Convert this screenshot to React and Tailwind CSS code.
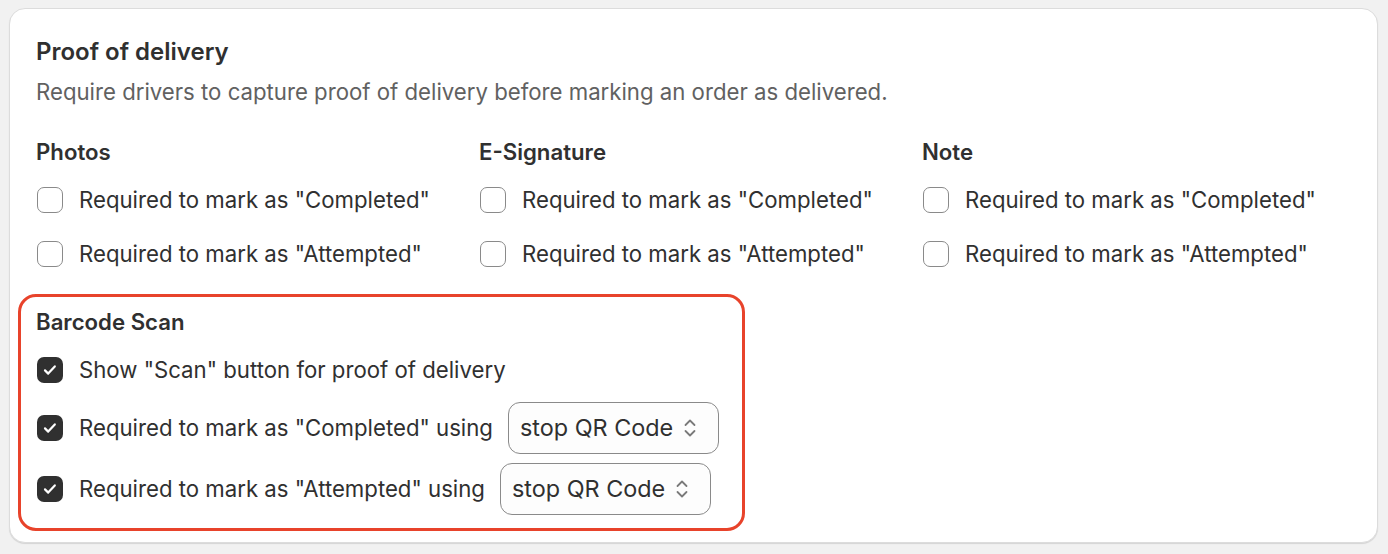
import React, { useState } from "react";

function Box({ checked, onChange }) {
  return (
    <button
      type="button"
      onClick={onChange}
      className={
        "ml-[1px] flex h-[26px] w-[26px] shrink-0 items-center justify-center rounded-[7px] " +
        (checked ? "bg-[#303030]" : "border border-[#8a8a8a] bg-white")
      }
    >
      {checked && (
        <svg width="16" height="16" viewBox="0 0 16 16" fill="none">
          <path
            d="M3 8.4l3.2 3.2 6.6-7.2"
            stroke="white"
            strokeWidth="2.2"
            strokeLinecap="round"
            strokeLinejoin="round"
          />
        </svg>
      )}
    </button>
  );
}

function Chevrons() {
  return (
    <svg width="14" height="24" viewBox="0 0 14 24" fill="none">
      <path
        d="M2.5 9l4.5-4.5 4.5 4.5M2.5 15l4.5 4.5 4.5-4.5"
        stroke="#7a7a7a"
        strokeWidth="1.8"
        strokeLinecap="round"
        strokeLinejoin="round"
      />
    </svg>
  );
}

function Select() {
  return (
    <div className="ml-[-1px] flex h-[52px] items-center gap-[10px] rounded-[12px] border border-[#8a8a8a] bg-[#fdfdfd] pl-[11px] pr-[21px] text-[23.4px]">
      <span>stop QR Code</span>
      <Chevrons />
    </div>
  );
}

const columns = ["Photos", "E-Signature", "Note"];

export default function App() {
  const [checks, setChecks] = useState({});
  const [scan, setScan] = useState({ show: true, completed: true, attempted: true });

  const toggle = (k) => setChecks((c) => ({ ...c, [k]: !c[k] }));
  const toggleScan = (k) => setScan((s) => ({ ...s, [k]: !s[k] }));

  return (
    <div
      className="min-h-[554px] bg-[#f1f1f1] pl-[9px] pr-[10px] pt-[8px] text-[22.2px] text-[#303030]"
      style={{ fontFamily: "Inter, 'Noto Sans', sans-serif" }}
    >
      <div className="h-[535px] rounded-[16px] border border-[#dcdcdc] bg-white pl-[26px] pt-[29px] shadow-[0_1px_1px_rgba(0,0,0,0.12)]">
        <h2 className="text-[24px] font-semibold leading-[28px]">Proof of delivery</h2>
        <p className="mt-[12px] leading-[28px] text-[#616161]">
          Require drivers to capture proof of delivery before marking an order as delivered.
        </p>

        <div className="mt-[32px] grid grid-cols-[443px_443px_1fr]">
          {columns.map((col) => (
            <div key={col}>
              <div className="font-semibold leading-[28px]">{col}</div>
              <div className="mt-[20px] flex flex-col gap-[26px]">
                {["Completed", "Attempted"].map((s) => (
                  <label key={s} className="flex h-[28px] items-center gap-[16px]">
                    <Box checked={!!checks[col + s]} onChange={() => toggle(col + s)} />
                    <span>Required to mark as "{s}"</span>
                  </label>
                ))}
              </div>
            </div>
          ))}
        </div>

        <div className="-ml-[18px] mt-[26px] w-[727px] rounded-[18px] border-[3px] border-[#e8432b] pb-[13px] pl-[15px] pt-[11px]">
          <div className="font-semibold leading-[28px]">Barcode Scan</div>
          <label className="mt-[20px] flex h-[28px] items-center gap-[16px]">
            <Box checked={scan.show} onChange={() => toggleScan("show")} />
            <span>Show "Scan" button for proof of delivery</span>
          </label>
          <div className="mt-[18px] flex items-center gap-[16px]">
            <Box checked={scan.completed} onChange={() => toggleScan("completed")} />
            <span>Required to mark as "Completed" using</span>
            <Select />
          </div>
          <div className="mt-[9px] flex items-center gap-[16px]">
            <Box checked={scan.attempted} onChange={() => toggleScan("attempted")} />
            <span>Required to mark as "Attempted" using</span>
            <Select />
          </div>
        </div>
      </div>
    </div>
  );
}
